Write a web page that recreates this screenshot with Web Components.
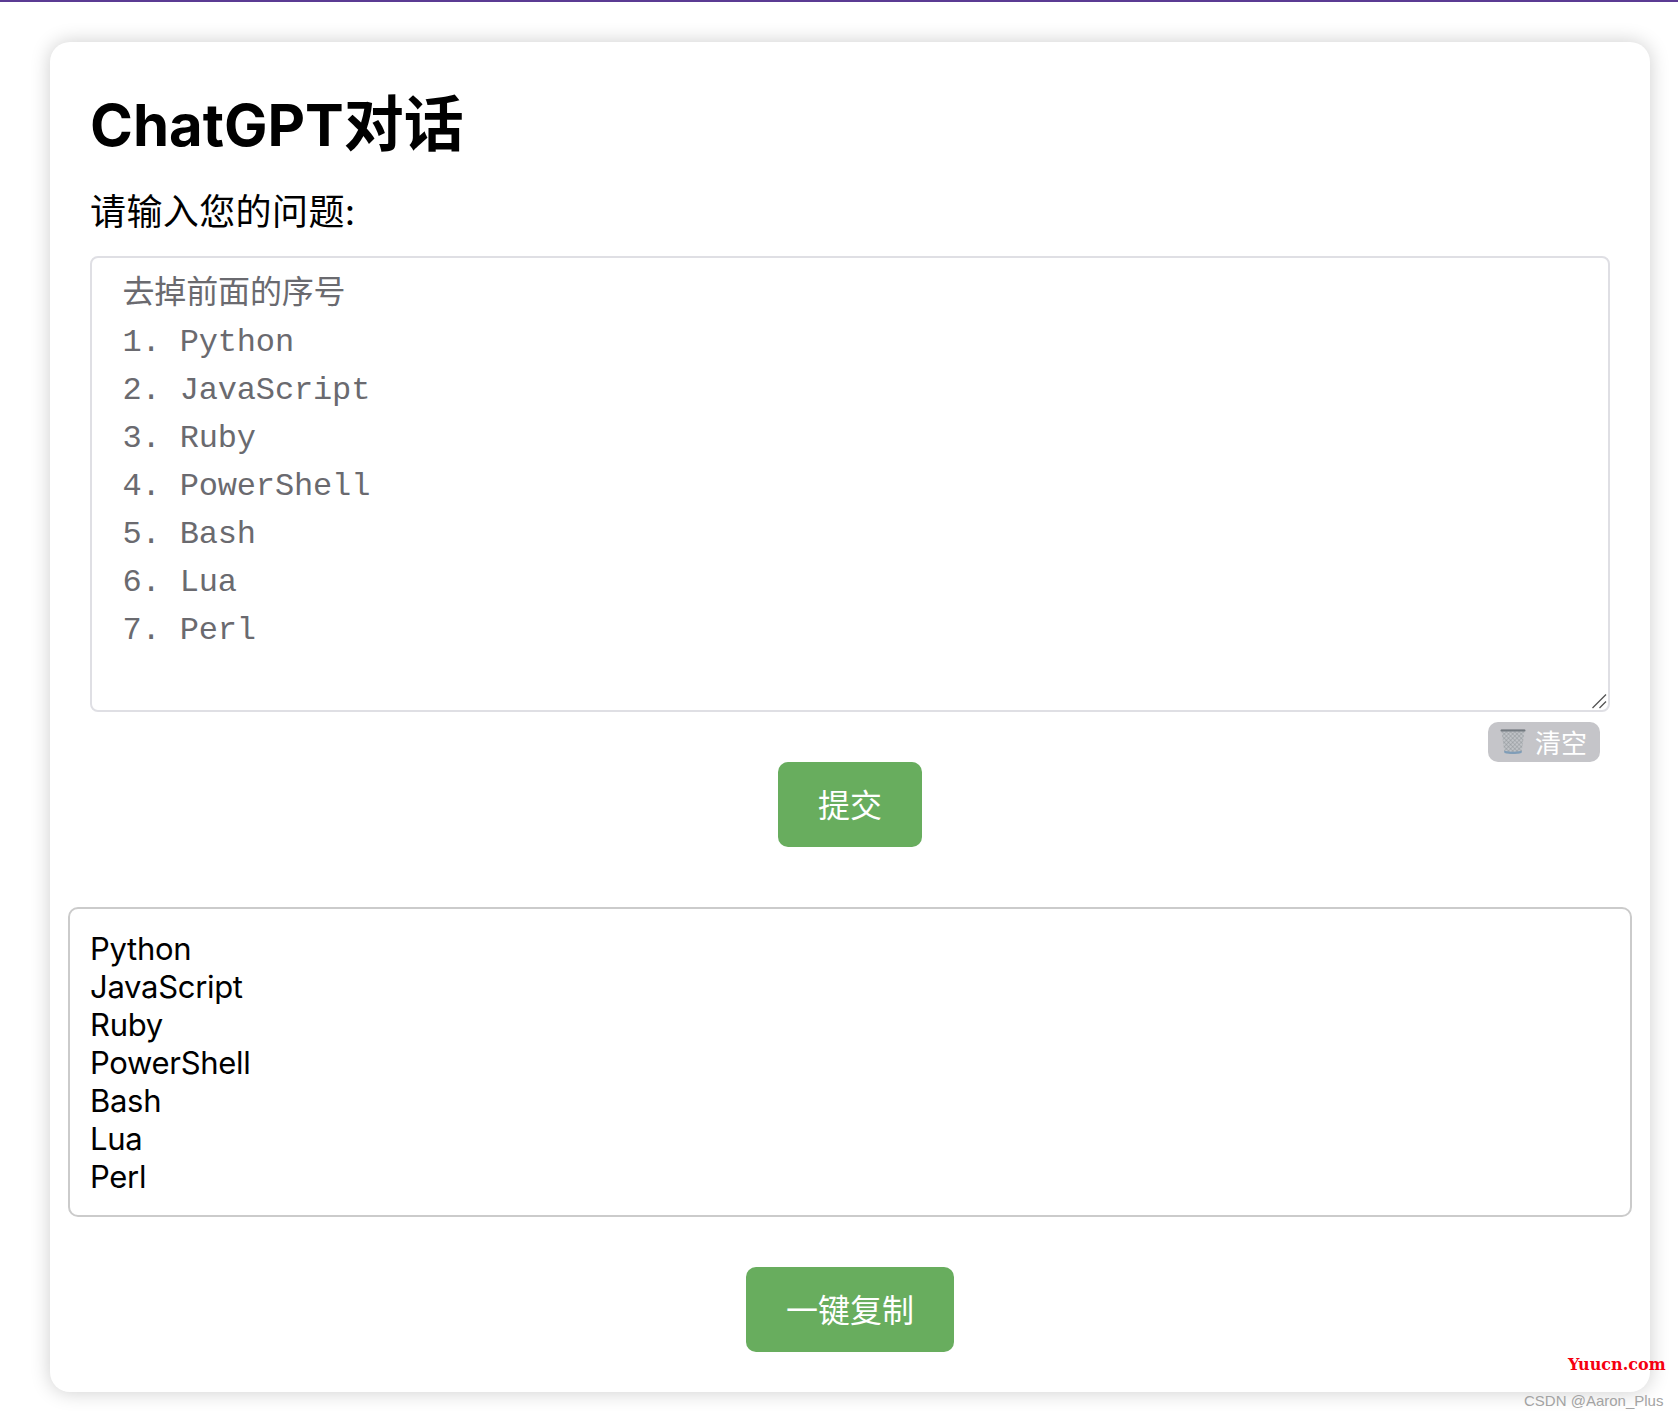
<!DOCTYPE html>
<html lang="zh">
<head>
<meta charset="utf-8">
<title>ChatGPT对话</title>
<style>
  html, body { margin: 0; padding: 0; background: #fff; }
  body {
    box-sizing: border-box;
    min-height: 1418px;
    font-family: Inter, "Noto Sans CJK SC", sans-serif;
    color: #000;
    border-top: 2px solid #5b3b93;
  }
  .cjk { font-size: 60px; }
</style>
</head>
<body>
<chat-page>
  <span slot="title">ChatGPT<span class="cjk">对话</span></span>
  <span slot="label">请输入您的问题:</span>
  <question-box>去掉前面的序号
1. Python
2. JavaScript
3. Ruby
4. PowerShell
5. Bash
6. Lua
7. Perl</question-box>
  <answer-box slot="answer">Python
JavaScript
Ruby
PowerShell
Bash
Lua
Perl</answer-box>
</chat-page>
<site-marks></site-marks>

<script>
/**
 * Question input with the clear button below it
 */
class QuestionBox extends HTMLElement {
  constructor() {
    super();
    this.attachShadow({ mode: "open" });
    this.shadowRoot.innerHTML = `
<style>
  :host { display: block; }
  .input {
    position: relative;
    box-sizing: border-box;
    height: 456px;
    padding: 13px 30.5px;
    border: 2px solid #dfdfe4;
    border-radius: 8px;
    background: #fff;
    color: #6a6a6f;
    font: 32px/48px "Liberation Mono", "Noto Sans CJK SC", monospace;
    letter-spacing: -0.15px;
  }
  slot { display: block; white-space: pre-line; }
  .grip { position: absolute; right: 1px; bottom: 1px; display: block; }
  .tools {
    display: flex;
    justify-content: flex-end;
    padding: 10px 10px 0 0;
  }
  .clear {
    display: flex;
    align-items: center;
    gap: 9px;
    box-sizing: border-box;
    width: 112px;
    height: 40px;
    padding-left: 12px;
    border-radius: 10px;
    background: #c5c5c9;
    color: #fff;
    font: 26px/38px "Noto Sans CJK SC", sans-serif;
  }
  .clear svg { display: block; flex: none; }
</style>
<div class="input">
  <slot></slot>
  <svg class="grip" width="16" height="16" viewBox="0 0 16 16">
    <path d="M1.5 15 L15 1.5 M8.5 15 L15 8.5" stroke="#555" stroke-width="1.3" fill="none"/>
  </svg>
</div>
<div class="tools">
  <div class="clear">
    <svg width="26" height="26" viewBox="0 0 26 26">
      <defs>
        <pattern id="mesh" width="3" height="3" patternUnits="userSpaceOnUse" patternTransform="rotate(45)">
          <rect width="3" height="3" fill="#c0c3c7"/>
          <path d="M0 0H3M0 0V3" stroke="#868b91" stroke-width="0.8"/>
        </pattern>
        <linearGradient id="rim" x1="0" y1="0" x2="0" y2="1">
          <stop offset="0" stop-color="#5d646b"/>
          <stop offset="1" stop-color="#8f959b"/>
        </linearGradient>
      </defs>
      <path d="M1.5 2 L4.5 24 Q13 26 21.5 24 L24.5 2 Z" fill="url(#mesh)"/>
      <path d="M4.2 21.8 L4.5 24 Q13 26 21.5 24 L21.8 21.8 Q13 23.6 4.2 21.8 Z" fill="#7f9db8"/>
      <rect x="0.5" y="0.5" width="25" height="2.2" rx="1" fill="url(#rim)"/>
    </svg>
    <span>清空</span>
  </div>
</div>
`;
  }
}

/**
 * Read only box that shows the answer
 */
class AnswerBox extends HTMLElement {
  constructor() {
    super();
    this.attachShadow({ mode: "open" });
    this.shadowRoot.innerHTML = `
<style>
  :host {
    display: block;
    box-sizing: border-box;
    padding: 21px 20px 19px;
    border: 2px solid #cbcbcb;
    border-radius: 10px;
    font: 31px/38px Inter, "Noto Sans CJK SC", sans-serif;
    letter-spacing: -0.3px;
  }
  slot { display: block; white-space: pre-line; }
</style>
<slot></slot>
`;
  }
}

/**
 * Green button, the label is passed in the slot
 */
class ActionButton extends HTMLElement {
  constructor() {
    super();
    this.attachShadow({ mode: "open" });
    this.shadowRoot.innerHTML = `
<style>
  :host {
    display: block;
    box-sizing: border-box;
    height: 85px;
    padding: 0 40px;
    border-radius: 10px;
    background: #68ad5e;
    color: #fff;
    font: 32px/83px "Noto Sans CJK SC", sans-serif;
    white-space: nowrap;
  }
</style>
<slot></slot>
`;
  }
}

/**
 * The white card with the whole chat form
 */
class ChatPage extends HTMLElement {
  constructor() {
    super();
    this.attachShadow({ mode: "open" });
    this.shadowRoot.innerHTML = `
<style>
  :host {
    display: block;
    box-sizing: border-box;
    width: 1600px;
    height: 1350px;
    margin: 40px 0 0 50px;
    padding: 0 18px;
    border-radius: 20px;
    background: #fff;
    box-shadow: 0 0 20px rgba(0, 0, 0, 0.2);
  }
  .form { padding: 0 22px; }
  h1 {
    margin: 0;
    padding-top: 47px;
    font: 700 58px/70px Inter, "Noto Sans CJK SC", sans-serif;
  }
  .label {
    margin-top: 30px;
    font: 36px/44px Inter, "Noto Sans CJK SC", sans-serif;
    letter-spacing: 0.4px;
  }
  .input-slot { margin-top: 22px; }
  .center { display: flex; justify-content: center; }
  .answer { margin-top: 60px; }
  .copy { margin-top: 50px; }
</style>
<div class="form">
  <h1><slot name="title"></slot></h1>
  <div class="label"><slot name="label"></slot></div>
  <div class="input-slot"><slot></slot></div>
  <div class="center"><action-button>提交</action-button></div>
</div>
<div class="answer"><slot name="answer"></slot></div>
<div class="center copy"><action-button>一键复制</action-button></div>
`;
  }
}

/**
 * Site watermarks printed over the bottom right corner
 */
class SiteMarks extends HTMLElement {
  constructor() {
    super();
    this.attachShadow({ mode: "open" });
    this.shadowRoot.innerHTML = `
<style>
  :host { display: block; }
  span { position: absolute; white-space: nowrap; }
  .yuucn {
    left: 1568px;
    top: 1353px;
    color: #f5000f;
    font: 700 16px/24px "DejaVu Serif", serif;
  }
  .csdn {
    left: 1524px;
    top: 1391px;
    color: #a3a3a3;
    font: 15px/20px "Liberation Sans", sans-serif;
  }
</style>
<span class="yuucn">Yuucn.com</span>
<span class="csdn">CSDN @Aaron_Plus</span>
`;
  }
}

window.customElements.define("question-box", QuestionBox);
window.customElements.define("answer-box", AnswerBox);
window.customElements.define("action-button", ActionButton);
window.customElements.define("chat-page", ChatPage);
window.customElements.define("site-marks", SiteMarks);
</script>
</body>
</html>
